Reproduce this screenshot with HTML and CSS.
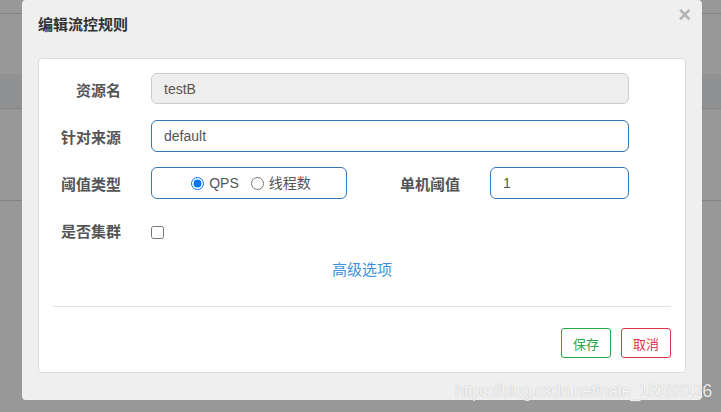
FILE: index.html
```html
<!DOCTYPE html>
<html lang="zh-CN">
<head>
  <meta charset="UTF-8">
  <title>编辑流控规则</title>
  <link rel="stylesheet" href="styles.css">
</head>
<body>
  <!-- 背后的页面（被遮罩） -->
  <div class="backdrop">
    <div class="bg-head"></div>
    <div class="bg-gap"></div>
    <div class="bg-band"></div>
    <div class="bg-row"></div>
  </div>

  <div class="modal">
    <div class="modal-header">
      <h4 class="modal-title">编辑流控规则</h4>
      <span class="close">&times;</span>
    </div>
    <div class="panel">
      <form class="rule-form">
        <div class="form-row">
          <label class="ctl-label">资源名</label>
          <input class="ctl ctl-wide" type="text" value="testB" disabled>
        </div>
        <div class="form-row">
          <label class="ctl-label">针对来源</label>
          <input class="ctl ctl-wide ctl-active" type="text" value="default">
        </div>
        <div class="form-row">
          <label class="ctl-label">阈值类型</label>
          <div class="ctl radio-box">
            <label class="radio"><input type="radio" name="grade" checked>QPS</label>
            <label class="radio"><input type="radio" name="grade">线程数</label>
          </div>
          <label class="ctl-label ctl-label-2">单机阈值</label>
          <input class="ctl ctl-small ctl-active" type="text" value="1">
        </div>
        <div class="form-row">
          <label class="ctl-label">是否集群</label>
          <div class="check-wrap"><input type="checkbox"></div>
        </div>
        <div class="adv">
          <a class="adv-link">高级选项</a>
        </div>
      </form>
      <div class="sep"></div>
      <div class="actions">
        <button class="btn btn-ok">保存</button>
        <button class="btn btn-cancel">取消</button>
      </div>
    </div>
  </div>

  <div class="watermark">https://blog.csdn.net/nate_18163126</div>
</body>
</html>
```

FILE: styles.css
```css
body { margin:0; width:721px; height:412px; overflow:hidden; background:#989898; font-family:'Liberation Sans', 'Noto Sans CJK SC', sans-serif; position:relative; }

.backdrop { width:100%; }
.bg-head { height:13px; border-bottom:1px solid #838383; }
.bg-gap { height:60px; }
.bg-band { height:34px; background:#8f9193; border-bottom:1px solid #838383; }
.bg-row { height:91px; border-bottom:1px solid #838383; }

.modal { position:absolute; left:22px; top:0; width:680px; height:400px; box-sizing:border-box; background:#efefef; border-radius:4px; padding:0 16px; }
.modal-header { display:flex; justify-content:space-between; align-items:flex-start; height:58px; box-sizing:border-box; padding-top:15px; }
.modal-title { margin:0; font-size:15px; line-height:20px; font-weight:bold; color:#333; }
.close { font-size:22px; font-weight:bold; line-height:20px; color:#b3b3b3; margin:-10px -5px 0 0; cursor:pointer; }

.panel { background:#fff; border:1px solid #dcdcdc; border-radius:4px; height:315px; box-sizing:border-box; padding:14px 14px 0; }
.rule-form { display:flex; flex-direction:column; gap:15px; }
.form-row { display:flex; align-items:flex-start; height:32px; }
.ctl-label { width:82px; margin-left:-14px; text-align:right; padding-top:8px; line-height:20px; font-size:15px; font-weight:bold; color:#555; margin-right:30px; flex-shrink:0; }
.ctl-label-2 { margin-left:31px; }
.ctl { height:32px; box-sizing:border-box; border:1px solid #ccc; border-radius:6px; padding:0 12px; font-family:inherit; font-size:14px; color:#555; background:#fff; outline:none; }
.ctl:disabled { background:#eee; height:31px; }
.ctl-active { border-color:#3478b8; }
.ctl-wide { width:478px; }
.ctl-small { width:139px; }

.radio-box { width:196px; display:flex; justify-content:center; align-items:center; gap:12px; border-color:#3478b8; padding:0 0 0 4px; }
.radio { display:flex; align-items:center; gap:5px; font-size:14px; color:#555; line-height:20px; }
.radio input { margin:0; width:13px; height:13px; }

.check-wrap { padding-top:11px; }
.check-wrap input { margin:0; width:13px; height:13px; }

.adv { text-align:center; margin-top:-1px; }
.adv-link { font-size:15px; line-height:20px; color:#3d8fd9; cursor:pointer; }

.sep { height:1px; background:#e5e5e5; margin-top:26px; }
.actions { display:flex; justify-content:flex-end; gap:10px; margin-top:21px; }
.btn { width:50px; height:30px; box-sizing:border-box; background:#fff; border-radius:3px; font-family:inherit; font-size:13px; cursor:pointer; padding:0; }
.btn-ok { border:1px solid #28a745; color:#28a745; }
.btn-cancel { border:1px solid #dc3545; color:#dc3545; }

.watermark { position:absolute; left:455px; top:381px; font-family:'Liberation Sans', sans-serif; font-size:18px; letter-spacing:-1px; color:rgba(255,255,255,0.88); text-shadow:0 0 1px rgba(0,0,0,0.3); white-space:nowrap; }
```
